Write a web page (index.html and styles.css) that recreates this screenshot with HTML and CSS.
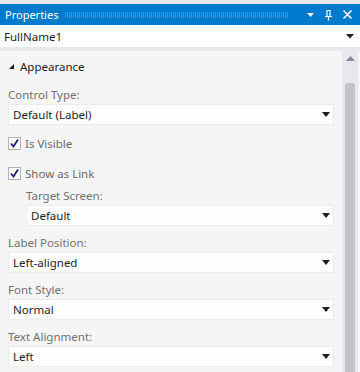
FILE: index.html
```html
<!DOCTYPE html>
<html lang="en">
<head>
  <meta charset="UTF-8" />
  <title>Properties</title>
  <link rel="stylesheet" href="styles.css">
</head>
<body>

<div class="panel">
  <!-- Title bar -->
  <div class="titlebar">
    <span class="title">Properties</span>
    <span class="grip"></span>
    <svg class="tb-icon" width="9" height="9" viewBox="0 0 9 9"><path d="M1 3 H8 L4.5 7 Z" fill="#fff"/></svg>
    <svg class="tb-icon" width="9" height="12" viewBox="0 0 9 12"><path d="M2.5 1.5 H6.5 M3 1.5 V7 M6 1.5 V7 M1 7.5 H8 M4.5 7.5 V11.5" stroke="#fff" stroke-width="1.2" fill="none"/></svg>
    <svg class="tb-icon" width="11" height="11" viewBox="0 0 11 11"><path d="M1.5 1.5 L9.5 9.5 M9.5 1.5 L1.5 9.5" stroke="#fff" stroke-width="1.6"/></svg>
  </div>

  <!-- Object selector -->
  <div class="selector">
    <span>FullName1</span>
    <svg width="8" height="5" viewBox="0 0 8 5"><path d="M0 0 H8 L4 4.5 Z" fill="#1e1e1e"/></svg>
  </div>

  <div class="body">
    <div class="content">
      <div class="category">
        <svg width="7" height="7" viewBox="0 0 7 7"><path d="M6 1 V6 H1 Z" fill="#1e1e1e"/></svg>
        <span>Appearance</span>
      </div>

      <div class="field">
        <label>Control Type:</label>
        <div class="dropdown"><span>Default (Label)</span><i class="arrow"></i></div>
      </div>

      <div class="check">
        <span class="box"><svg width="11" height="11" viewBox="0 0 11 11"><path d="M2 5.5 L4.5 8.5 L9 1.5" stroke="#1b1f7a" stroke-width="1.8" fill="none"/></svg></span>
        <span>Is Visible</span>
      </div>

      <div class="check last">
        <span class="box"><svg width="11" height="11" viewBox="0 0 11 11"><path d="M2 5.5 L4.5 8.5 L9 1.5" stroke="#1b1f7a" stroke-width="1.8" fill="none"/></svg></span>
        <span>Show as Link</span>
      </div>

      <div class="field indent">
        <label>Target Screen:</label>
        <div class="dropdown"><span>Default</span><i class="arrow"></i></div>
      </div>

      <div class="field">
        <label>Label Position:</label>
        <div class="dropdown"><span>Left-aligned</span><i class="arrow"></i></div>
      </div>

      <div class="field">
        <label>Font Style:</label>
        <div class="dropdown"><span>Normal</span><i class="arrow"></i></div>
      </div>

      <div class="field">
        <label>Text Alignment:</label>
        <div class="dropdown"><span>Left</span><i class="arrow"></i></div>
      </div>
    </div>

    <!-- Vertical scrollbar -->
    <div class="scrollbar">
      <svg class="up" width="9" height="5" viewBox="0 0 9 5"><path d="M0 5 H9 L4.5 0 Z" fill="#868999"/></svg>
      <div class="thumb"></div>
    </div>
  </div>
</div>

</body>
</html>
```

FILE: styles.css
```css
/* General */
body {
  margin: 0;
  font-family: 'Noto Sans', 'Open Sans', sans-serif;
  font-size: 11.5px;
  color: #1e1e1e;
  background: #f5f5f5;
}

.panel {
  width: 360px;
  height: 372px;
  overflow: hidden;
  background: #f5f5f5;
  border-top: 4px solid #e6e7ed;
  box-sizing: border-box;
  display: flex;
  flex-direction: column;
}

/* Title bar */
.titlebar {
  height: 21px;
  background: #007acc;
  display: flex;
  align-items: center;
  padding: 0 7px 0 5px;
  flex-shrink: 0;
}

.title {
  color: #ffffff;
  font-size: 11px;
  line-height: 21px;
}

/* dotted drag grip */
.grip {
  flex: 1;
  height: 6px;
  margin: 0 8px 0 7px;
  background-image:
    linear-gradient(90deg, rgba(255, 255, 255, 0.22) 1px, transparent 1px),
    linear-gradient(rgba(0, 122, 204, 1) 1px, transparent 1px);
  background-size: 2px 2px, 2px 2px;
}

.tb-icon {
  margin-left: 9px;
}

/* Object selector */
.selector {
  height: 22px;
  background: #ffffff;
  display: flex;
  align-items: center;
  justify-content: space-between;
  padding: 0 6px 0 4px;
  border-bottom: 4px solid #e9e9ec;
  flex-shrink: 0;
}

/* Body */
.body {
  flex: 1;
  display: flex;
  min-height: 0;
}

.content {
  flex: 1;
  padding: 7px 8px 0 8px;
}

.category {
  display: flex;
  align-items: center;
  gap: 5px;
  height: 16px;
  margin-bottom: 14px;
}

.field {
  margin-bottom: 10px;
}

.field.indent {
  margin-left: 18px;
}

.field label {
  display: block;
  color: #717171;
  line-height: 14px;
  margin-bottom: 2px;
}

.dropdown {
  height: 21px;
  box-sizing: border-box;
  background: #fdfdfd;
  border: 1px solid #ececec;
  display: flex;
  align-items: center;
  justify-content: space-between;
  padding: 0 3px 0 4px;
}

.arrow {
  width: 0;
  height: 0;
  border-left: 4px solid transparent;
  border-right: 4px solid transparent;
  border-top: 5px solid #1e1e1e;
}

/* Checkboxes */
.check {
  display: flex;
  align-items: center;
  gap: 4px;
  height: 16px;
  color: #6a6a6a;
  margin-bottom: 14px;
}

.check.last {
  margin-bottom: 8px;
}

.box {
  width: 13px;
  height: 13px;
  box-sizing: border-box;
  border: 1px solid #b0b0b8;
  background: #ffffff;
  display: flex;
  align-items: center;
  justify-content: center;
}

/* Scrollbar */
.scrollbar {
  width: 16px;
  margin-right: 2px;
  background: #e8e8ec;
  display: flex;
  flex-direction: column;
  align-items: center;
}

.scrollbar .up {
  margin-top: 5px;
}

.thumb {
  width: 10px;
  flex: 1;
  margin-top: 22px;
  background: #c2c3c9;
  border-radius: 3px 3px 0 0;
}
```
